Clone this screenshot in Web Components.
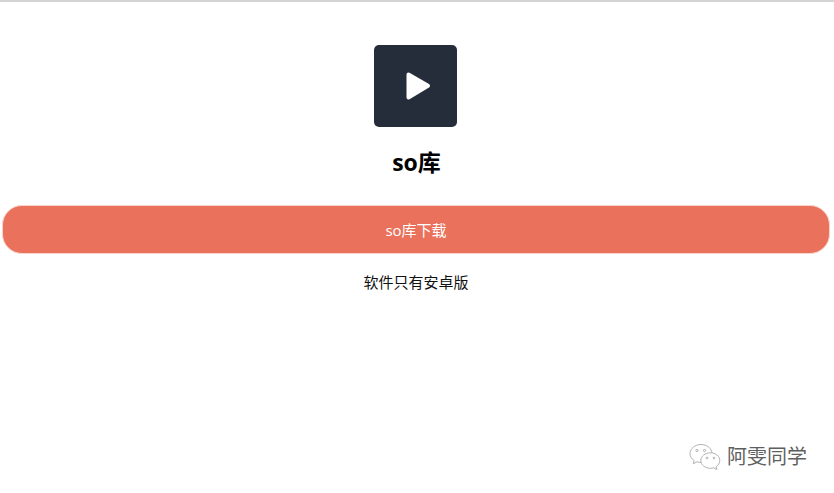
<!DOCTYPE html>
<html lang="zh">
<head>
<meta charset="utf-8">
<title>so库</title>
<style>
  html, body { margin: 0; height: 100%; background: #fff; }
  body { font-family: "Open Sans", "Noto Sans CJK SC", sans-serif; overflow: hidden; }
</style>
</head>
<body>
<download-page>
  <app-logo slot="logo"></app-logo>
  <span slot="name">so库</span>
  <download-button slot="action">so库下载</download-button>
  <span slot="note">软件只有安卓版</span>
  <wechat-mark slot="mark">阿雯同学</wechat-mark>
</download-page>

<script>
// page frame: column of logo, title, button, note. The wechat mark sits over the corner
class DownloadPage extends HTMLElement {
  connectedCallback() {
    const shadow = this.attachShadow({ mode: "open" });
    shadow.innerHTML = `<style>
      :host {
        display: flex;
        flex-direction: column;
        align-items: center;
        position: relative;
        box-sizing: border-box;
        height: 493px;
        padding-top: 43px;
        border-top: 2px solid #d4d4d4;
      }
      .logo { margin-right: 3px; }
      .name {
        margin-top: 21px;
        margin-right: 1px;
        font-size: 23px;
        line-height: 28px;
        font-weight: 700;
        color: #000;
      }
      .action { margin-top: 29px; margin-right: 2px; }
      .note {
        margin-top: 17px;
        margin-right: 2px;
        font-size: 15px;
        line-height: 22px;
        color: #111;
      }
      .mark { position: absolute; right: 27px; bottom: 22px; }
    </style>
    <div class="logo"><slot name="logo"></slot></div>
    <div class="name"><slot name="name"></slot></div>
    <div class="action"><slot name="action"></slot></div>
    <div class="note"><slot name="note"></slot></div>
    <div class="mark"><slot name="mark"></slot></div>`;
  }
}

class AppLogo extends HTMLElement {
  connectedCallback() {
    const shadow = this.attachShadow({ mode: "open" });
    shadow.innerHTML = `<style>
      :host {
        display: flex;
        align-items: center;
        justify-content: center;
        width: 83px;
        height: 82px;
        border-radius: 5px;
        background: #252d3a;
      }
      svg { display: block; margin-left: 5px; }
    </style>
    <svg width="26" height="30" viewBox="0 0 26 30">
      <path d="M3.500 3.500 L23 14.800 L3.500 26.500 Z" fill="#fff" stroke="#fff" stroke-width="4" stroke-linejoin="round"/>
    </svg>`;
  }
}

class DownloadButton extends HTMLElement {
  connectedCallback() {
    const shadow = this.attachShadow({ mode: "open" });
    shadow.innerHTML = `<style>
      :host {
        display: flex;
        align-items: center;
        justify-content: center;
        box-sizing: border-box;
        width: 828px;
        height: 49px;
        border-radius: 20px;
        border: 1px solid #f9d3c9;
        background: #ea715c;
        color: #fff;
        font-size: 15px;
      }
    </style><slot></slot>`;
  }
}

class WechatMark extends HTMLElement {
  connectedCallback() {
    const shadow = this.attachShadow({ mode: "open" });
    shadow.innerHTML = `<style>
      :host {
        display: flex;
        align-items: center;
        gap: 5px;
        color: #5f5f5f;
        font-size: 20px;
        line-height: 24px;
      }
      svg { display: block; }
    </style>
    <svg width="34" height="28" viewBox="0 0 34 28" fill="#fff" stroke="#a9a9a9" stroke-width="0.9">
      <path d="M13 1.500C7 1.500 2 5.600 2 10.600c0 2.900 1.600 5.300 4.200 7l-1 3.200 3.800-2c1.200.4 2.600.6 4 .6 6 0 11-4 11-8.800 0-5-5-9.100-11-9.100Z"/>
      <path d="M22.500 9.800c-5.500 0-9.700 3.500-9.700 7.700 0 4.300 4.200 7.800 9.700 7.800 1.100 0 2.200-.2 3.200-.5l3.100 1.700-.8-2.800c2.400-1.400 3.800-3.700 3.800-6.200 0-4.200-4.200-7.700-9.300-7.700Z"/>
      <circle cx="9" cy="7.500" r="1.100"/><circle cx="16.500" cy="7.500" r="1.100"/>
      <circle cx="19" cy="15" r="0.900"/><circle cx="26" cy="15" r="0.900"/>
    </svg>
    <span><slot></slot></span>`;
  }
}

customElements.define("download-page", DownloadPage);
customElements.define("app-logo", AppLogo);
customElements.define("download-button", DownloadButton);
customElements.define("wechat-mark", WechatMark);
</script>
</body>
</html>
